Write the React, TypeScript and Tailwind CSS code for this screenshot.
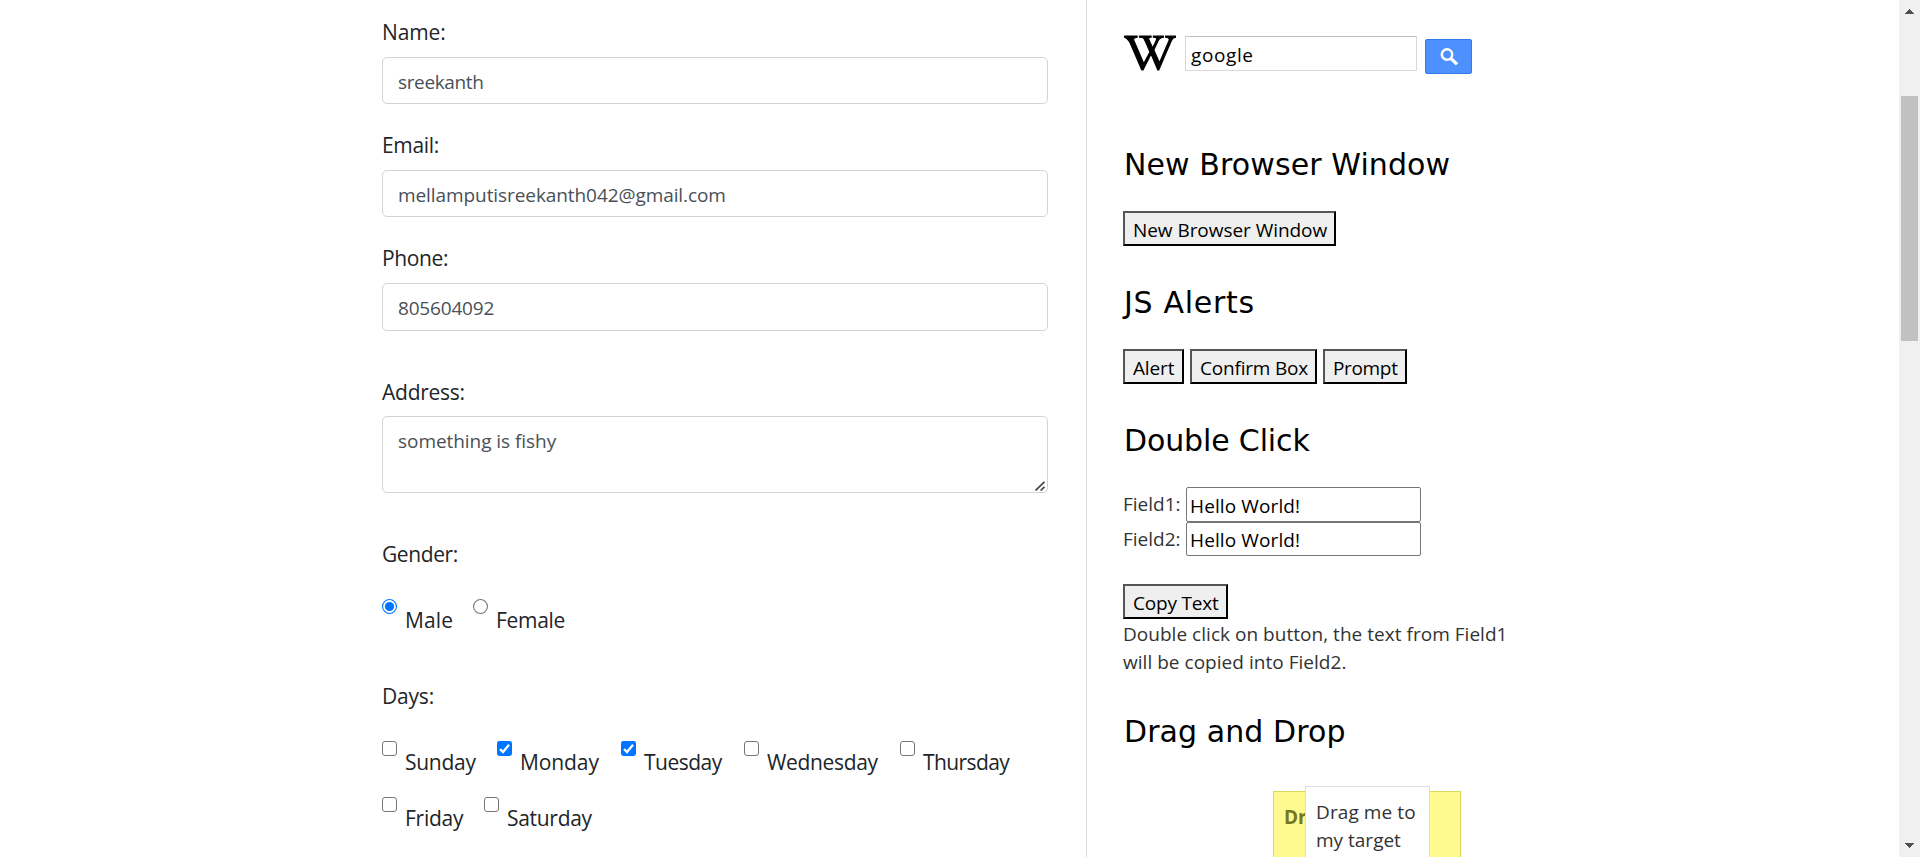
import React from "react";
import { FaWikipediaW } from "react-icons/fa";

type Tone = { text: string; cls: string };

function Label({ text, cls }: Tone) {
  return <label className={`block h-[33px] text-[21px] leading-[33px] text-[#212529] ${cls}`}>{text}</label>;
}

function Field({ value, cls }: { value: string; cls: string }) {
  return (
    <input
      type="text"
      defaultValue={value}
      className={`mt-2 block w-[666px] rounded-[5px] border border-[#ced4da] bg-white pt-[3px] pr-4 pl-[15px] text-[19px] leading-[42px] text-[#495057] outline-none ${cls}`}
    />
  );
}

function Check({ text, checked, cls, tracking }: { text: string; checked?: boolean; cls: string; tracking: string }) {
  return (
    <label className={`flex h-[38px] shrink-0 gap-[8px] ${cls}`}>
      {checked ? (
        <svg className="size-[15px] shrink-0" viewBox="0 0 15 15">
          <rect width="15" height="15" rx="2.4" fill="#0075ff" />
          <path d="M3 8.1 6 11 12 3.8" fill="none" stroke="#fff" strokeWidth="2.3" />
        </svg>
      ) : (
        <span className="size-[15px] shrink-0 rounded-[3px] border border-[#767676] bg-white" />
      )}
      <span className={`mt-[5px] h-[33px] text-[21px] leading-[33px] text-[#212529] ${tracking}`}>{text}</span>
    </label>
  );
}

function Radio({ text, checked, cls, tracking }: { text: string; checked?: boolean; cls: string; tracking: string }) {
  return (
    <label className={`flex h-[38px] shrink-0 gap-[8px] ${cls}`}>
      <svg className="size-[15px] shrink-0" viewBox="0 0 15 15">
        <circle cx="7.5" cy="7.5" r="6.95" fill="#fff" stroke={checked ? "#0075ff" : "#767676"} strokeWidth="1.1" />
        {checked && <circle cx="7.5" cy="7.5" r="4.6" fill="#0075ff" />}
      </svg>
      <span className={`mt-[5px] h-[33px] text-[21px] leading-[33px] text-[#212529] ${tracking}`}>{text}</span>
    </label>
  );
}

function Heading({ text, cls }: Tone) {
  return (
    <h2 className={`h-[35px] pl-px font-['DejaVu_Sans',sans-serif] text-[30px] leading-[35px] whitespace-nowrap text-black ${cls}`}>
      {text}
    </h2>
  );
}

function PlainButton({ text, cls }: Tone) {
  return (
    <button
      className={`block h-[35px] border-2 border-t-[#555] border-r-black border-b-black border-l-[#555] bg-[#efefef] pt-[3px] pl-2 text-left text-[19px] leading-[28px] whitespace-nowrap text-black ${cls}`}
    >
      {text}
    </button>
  );
}

function CopyField({ label, cls, pad }: { label: string; cls: string; pad: string }) {
  return (
    <div className={`flex ${cls}`}>
      <span className="w-[63px] pt-[2px] text-[19px] leading-[31px] text-[#333]">{label}</span>
      <input
        type="text"
        defaultValue="Hello World!"
        className={`h-full w-[235px] rounded-[2px] border border-[#767676] bg-white pb-0 pl-[3px] text-[19px] leading-[28px] tracking-[0.12px] text-black outline-none ${pad}`}
      />
    </div>
  );
}

export default function App() {
  return (
    <div className="flex h-[857px] w-full overflow-hidden bg-white font-['Open_Sans',sans-serif]">
      <main className="flex w-[1086px] shrink-0 flex-col pt-4 pl-[382px]">
        <Label text="Name:" cls="tracking-[-0.1px]" />
        <Field value="sreekanth" cls="h-[47px] tracking-[-0.36px]" />
        <Label text="Email:" cls="mt-[25px] tracking-[-0.35px]" />
        <Field value="mellamputisreekanth042@gmail.com" cls="h-[47px] tracking-[-0.08px]" />
        <Label text="Phone:" cls="mt-[25px] tracking-[-0.35px]" />
        <Field value="805604092" cls="h-[48px] pb-[2px] tracking-[-0.18px]" />
        <Label text="Address:" cls="mt-[45px] tracking-[-0.25px]" />
        <div className="relative mt-[7px] h-[77px] w-[666px]">
          <textarea
            defaultValue="something is fishy"
            className="block h-full w-full resize-none overflow-hidden rounded-[5px] border border-[#ced4da] bg-white pt-[10px] pl-[15px] text-[19px] leading-[28px] tracking-[-0.05px] text-[#495057] outline-none"
          />
          <svg className="absolute right-[3px] bottom-[2px] size-[10px]" viewBox="0 0 10 10">
            <path d="M.5 9.5 9.5 .8M5.6 9.5 9.5 5.8" stroke="#444" strokeWidth="1.7" />
          </svg>
        </div>
        <Label text="Gender:" cls="mt-[45px] tracking-[-0.4px]" />
        <div className="mt-[28px] flex">
          <Radio text="Male" checked cls="w-[91px]" tracking="tracking-[0.1px]" />
          <Radio text="Female" cls="w-[100px]" tracking="tracking-[-0.3px]" />
        </div>
        <Label text="Days:" cls="mt-[43px] tracking-[-0.2px]" />
        <div className="mt-[28px] flex">
          <Check text="Sunday" cls="w-[115px]" tracking="tracking-[-0.26px]" />
          <Check text="Monday" checked cls="w-[124px]" tracking="tracking-[-0.1px]" />
          <Check text="Tuesday" checked cls="w-[123px]" tracking="tracking-[-0.5px]" />
          <Check text="Wednesday" cls="w-[156px]" tracking="tracking-[-0.34px]" />
          <Check text="Thursday" cls="w-[120px]" tracking="tracking-[-0.6px]" />
        </div>
        <div className="mt-[18px] flex">
          <Check text="Friday" cls="w-[102px]" tracking="tracking-[-0.26px]" />
          <Check text="Saturday" cls="w-[120px]" tracking="tracking-[-0.3px]" />
        </div>
      </main>

      <aside className="flex grow flex-col border-l border-[#ddd] pt-9 pl-9">
        <div className="flex h-[39px] items-start">
          <FaWikipediaW
            preserveAspectRatio="none"
            stroke="black"
            strokeWidth="14"
            className="ml-px h-[42px] w-[52px] -translate-y-[4px] text-black"
          />
          <input
            type="text"
            defaultValue="google"
            className="ml-[9px] h-[35px] w-[232px] border border-[#d9d9d9] border-t-[#c0c0c0] bg-white pt-[3px] pb-0 pl-[5px] text-[19px] leading-[28px] tracking-[0.6px] text-black outline-none"
          />
          <button className="mt-[3px] ml-2 flex h-[35px] w-[47px] items-center justify-center rounded-[2px] border border-[#3079ed] bg-[#4d90fe]">
            <svg className="size-[18px] -translate-y-[0.5px]" viewBox="0 0 18 18">
              <circle cx="7" cy="7" r="5.2" fill="none" stroke="#fff" strokeWidth="2.5" />
              <path d="m11 11 6 5.8" stroke="#fff" strokeWidth="3.2" />
            </svg>
          </button>
        </div>

        <Heading text="New Browser Window" cls="mt-[72px] tracking-[0.1px]" />
        <PlainButton text="New Browser Window" cls="mt-[29px] w-[213px] tracking-[-0.05px]" />

        <Heading text="JS Alerts" cls="mt-[39px] tracking-[0.7px]" />
        <div className="mt-[29px] flex gap-[6px]">
          <PlainButton text="Alert" cls="w-[61px] tracking-[-0.15px]" />
          <PlainButton text="Confirm Box" cls="w-[127px] tracking-[-0.2px]" />
          <PlainButton text="Prompt" cls="w-[84px] tracking-[-0.34px]" />
        </div>

        <Heading text="Double Click" cls="mt-[39px] tracking-[-0.14px]" />
        <CopyField label="Field1:" cls="mt-[29px] h-[35px]" pad="pt-[3px]" />
        <CopyField label="Field2:" cls="h-[34px]" pad="pt-[2px]" />
        <PlainButton text="Copy Text" cls="mt-[28px] w-[105px] tracking-[-0.18px]" />
        <p className="mt-px text-[19px] leading-[28px] tracking-[0.03px] text-[#333]">
          Double click on button, the text from Field1
          <br />
          will be copied into Field2.
        </p>

        <Heading text="Drag and Drop" cls="mt-[38px] tracking-[0.08px]" />
        <div className="relative mt-[37px] h-[71px] shrink-0">
          <div className="absolute top-[5px] left-[150px] h-[100px] w-[188px] border border-[#dad55e] bg-[#fffa90]">
            <p className="pt-[11px] pl-[10px] text-[19px] leading-[28px] font-bold whitespace-nowrap text-[#777620]">Dr</p>
          </div>
          <div className="absolute top-0 left-[182px] h-[120px] w-[125px] border border-[#ddd] bg-white pt-[11px] pl-[10px] text-[19px] leading-[28px] whitespace-nowrap text-[#333]">
            <p className="tracking-[0.1px]">Drag me to</p>
            <p>my target</p>
          </div>
        </div>
      </aside>

      <div className="flex w-[21px] shrink-0 flex-col items-center bg-[#f0f0f0]">
        <svg className="mt-[9px] h-[5px] w-[9px] shrink-0" viewBox="0 0 9 5" shapeRendering="crispEdges">
          <path d="M4.5 0 9 5H0Z" fill="#505050" />
        </svg>
        <div className="mt-[82px] h-[245px] w-[17px] shrink-0 bg-[#c1c1c1]" />
        <svg className="mt-auto mb-[9px] h-[5px] w-[9px] shrink-0" viewBox="0 0 9 5" shapeRendering="crispEdges">
          <path d="M0 0h9L4.5 5Z" fill="#505050" />
        </svg>
      </div>
    </div>
  );
}
